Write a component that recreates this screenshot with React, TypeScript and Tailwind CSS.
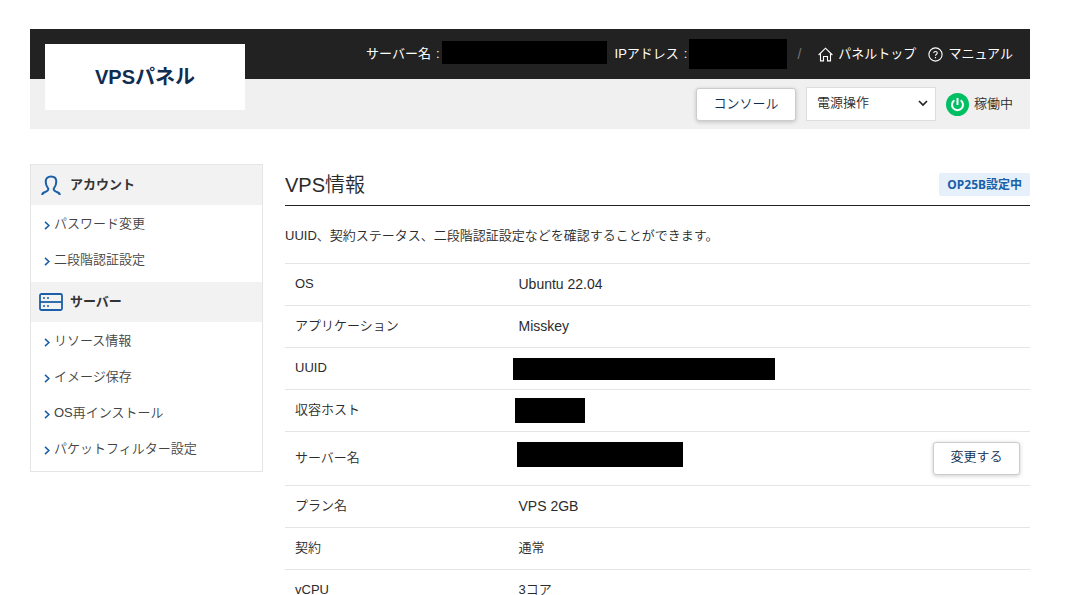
import type { ReactNode } from "react";

const serverLinks = ["リソース情報", "イメージ保存", "OS再インストール", "パケットフィルター設定"];
const accountLinks = ["パスワード変更", "二段階認証設定"];

function HomeIcon() {
  return (
    <svg viewBox="0 0 15 15" className="size-[15px]" fill="none" stroke="currentColor" strokeWidth="1.1" aria-hidden="true">
      <path d="M0.6 8 7.5 1.2 14.4 8" />
      <path d="M2.500 6.400V13.900H5.500V9.500H9.500V13.900H12.500V6.400" />
    </svg>
  );
}

function HelpIcon() {
  return (
    <svg viewBox="0 0 15 15" className="size-[15px]" fill="none" stroke="currentColor" strokeWidth="1.1" aria-hidden="true">
      <circle cx="7.5" cy="7.5" r="6.6" />
      <path d="M5.700 6.100C5.700 3.900 9.300 3.900 9.300 6.100C9.300 7.300 7.500 7.300 7.500 8.800" />
      <path d="M7.500 10V11.200" />
    </svg>
  );
}

function PowerIcon() {
  return (
    <svg viewBox="0 0 23 23" className="size-[23px]" fill="none" aria-hidden="true">
      <circle cx="11.5" cy="11.5" r="11.5" fill="#00bf63" />
      <path d="M8.300 7.200A5.500 5.500 0 1 0 14.700 7.200" stroke="#fff" strokeWidth="2" />
      <path d="M11.500 5V12" stroke="#fff" strokeWidth="2" />
    </svg>
  );
}

function PersonIcon() {
  return (
    <svg viewBox="0 0 20 21" className="h-[21px] w-5" fill="none" stroke="#1a5fa8" strokeWidth="2" aria-hidden="true">
      <path d="M1.200 20C1.200 17.500 3.300 17.300 5 16.600C7.200 15.700 8 14.300 6.800 12.800C5.300 11 4.700 9 4.700 6.600C4.700 3.200 7 1.400 10 1.400S15.300 3.200 15.300 6.600C15.300 9 14.700 11 13.200 12.800C12 14.300 12.800 15.700 15 16.600C16.700 17.300 18.800 17.500 18.800 20" />
    </svg>
  );
}

function ServerIcon() {
  return (
    <svg viewBox="0 0 24 18" className="h-[18px] w-6" fill="none" stroke="#1a5fa8" aria-hidden="true">
      <rect x="1" y="1" width="22" height="16" rx="1.500" strokeWidth="1.800" />
      <path d="M1 9H23" strokeWidth="1.800" />
      <path d="M4 5H6M8 5H10M4 13H6M8 13H10" strokeWidth="1.500" />
    </svg>
  );
}

function SideSection({ icon, title, links }: { icon: ReactNode; title: string; links: string[] }) {
  return (
    <section>
      <h2 className="flex h-10 items-center bg-[#f2f2f2] pl-2 text-[13px] font-bold text-[#333]">
        <span className="mr-[7px] flex w-6 justify-center">{icon}</span>
        {title}
      </h2>
      <ul className="pt-px pb-1">
        {links.map((label) => (
          <li key={label}>
            <a href="#" className="flex h-9 items-center gap-1 pl-[13px] text-[#444]">
              <svg viewBox="0 0 6 9" className="mt-0.5 h-[9px] w-1.5" fill="none" stroke="#1a5fa8" strokeWidth="1.600" aria-hidden="true">
                <path d="M1 0.800 4.900 4.500 1 8.200" />
              </svg>
              {label}
            </a>
          </li>
        ))}
      </ul>
    </section>
  );
}

function Row({ label, children }: { label: string; children: ReactNode }) {
  return (
    <tr className="h-[42px] border-t border-[#e5e5e5]">
      <th scope="row" className="w-[30%] pb-0.5 pl-2.5 text-left font-[350]">{label}</th>
      {children}
    </tr>
  );
}

const buttonClass =
  "rounded-[3px] border border-[#ccc] bg-white text-[#0f2d50] shadow-[0_1px_4px_rgba(0,0,0,0.2)]";

export default function App() {
  return (
    <div className="mr-12 ml-[30px] pt-[29px] font-['Liberation_Sans','Noto_Sans_CJK_JP',sans-serif] text-[13px] leading-5 font-[350] text-[#2b2b2b]">
      <header className="relative">
        <h1 className="absolute top-[15px] left-[15px] flex h-[66px] w-[200px] items-center justify-center bg-white text-xl font-bold text-[#0f2d50]">
          VPSパネル
        </h1>
        <div className="flex h-[50px] items-center justify-end bg-[#222] pr-[17px] font-normal text-white">
          <span className="mr-0.5 flex gap-[5px]"><span>サーバー名</span><span>:</span></span>
          <span className="mr-2 mb-1 h-[23px] w-[165px] bg-black" />
          <span className="mr-0.5 flex gap-[5px]"><span>IPアドレス</span><span>:</span></span>
          <span className="h-[30px] w-[98px] bg-black" />
          <span className="mx-2.5 text-sm text-[#777]">/</span>
          <a href="#" className="ml-[7px] flex items-center gap-[5px]">
            <HomeIcon />
            パネルトップ
          </a>
          <a href="#" className="ml-3 flex items-center gap-[5px]">
            <HelpIcon />
            マニュアル
          </a>
        </div>
        <div className="flex h-[50px] items-center justify-end gap-2.5 bg-[#f0f0f0] pr-[17px]">
          <button type="button" className={`${buttonClass} h-[33px] w-[100px]`}>コンソール</button>
          <div className="relative">
            <select
              aria-label="電源操作"
              className="block h-[34px] w-[130px] appearance-none border border-[#ddd] bg-white pb-0.5 pl-2.5"
            >
              <option>電源操作</option>
            </select>
            <svg viewBox="0 0 10 7" className="pointer-events-none absolute top-[13px] right-2 h-[7px] w-2.5" fill="none" stroke="#222" strokeWidth="1.700" aria-hidden="true">
              <path d="M1 1 5 5 9 1" />
            </svg>
          </div>
          <div className="flex items-center gap-[5px]">
            <PowerIcon />
            <span>稼働中</span>
          </div>
        </div>
      </header>

      <div className="mt-[35px] flex items-start gap-[22px]">
        <nav className="w-[233px] shrink-0 border border-[#e5e5e5]">
          <SideSection icon={<PersonIcon />} title="アカウント" links={accountLinks} />
          <SideSection icon={<ServerIcon />} title="サーバー" links={serverLinks} />
        </nav>

        <main className="min-w-0 flex-1">
          <div className="flex h-[42px] items-center justify-between border-b border-[#222]">
            <h2 className="text-xl">VPS情報</h2>
            <span className="flex h-[23px] items-center rounded-[2px] bg-[#e5f0fb] px-2 font-['Noto_Sans','Noto_Sans_CJK_JP',sans-serif] text-xs font-bold text-[#1a5fa8]">
              OP25B設定中
            </span>
          </div>
          <p className="mt-5 mb-[17px]">UUID、契約ステータス、二段階認証設定などを確認することができます。</p>
          <table className="w-full border-collapse">
            <tbody>
              <Row label="OS"><td className="pb-0.5 pl-2.5 text-sm">Ubuntu 22.04</td></Row>
              <Row label="アプリケーション"><td className="pb-0.5 pl-2.5 text-sm">Misskey</td></Row>
              <Row label="UUID">
                <td className="pl-1"><div className="h-[22px] w-[262px] bg-black" /></td>
              </Row>
              <Row label="収容ホスト">
                <td className="pl-1.5"><div className="h-[25px] w-[70px] bg-black" /></td>
              </Row>
              <Row label="サーバー名">
                <td className="py-2.5 pr-2.5 pl-2">
                  <div className="flex items-start justify-between">
                    <div className="h-[25px] w-[166px] bg-black" />
                    <button type="button" className={`${buttonClass} h-[33px] w-[87px] pb-1`}>変更する</button>
                  </div>
                </td>
              </Row>
              <Row label="プラン名"><td className="pb-0.5 pl-2.5 text-sm">VPS 2GB</td></Row>
              <Row label="契約"><td className="pb-0.5 pl-2.5">通常</td></Row>
              <Row label="vCPU"><td className="pb-0.5 pl-2.5">3コア</td></Row>
            </tbody>
          </table>
        </main>
      </div>
    </div>
  );
}
